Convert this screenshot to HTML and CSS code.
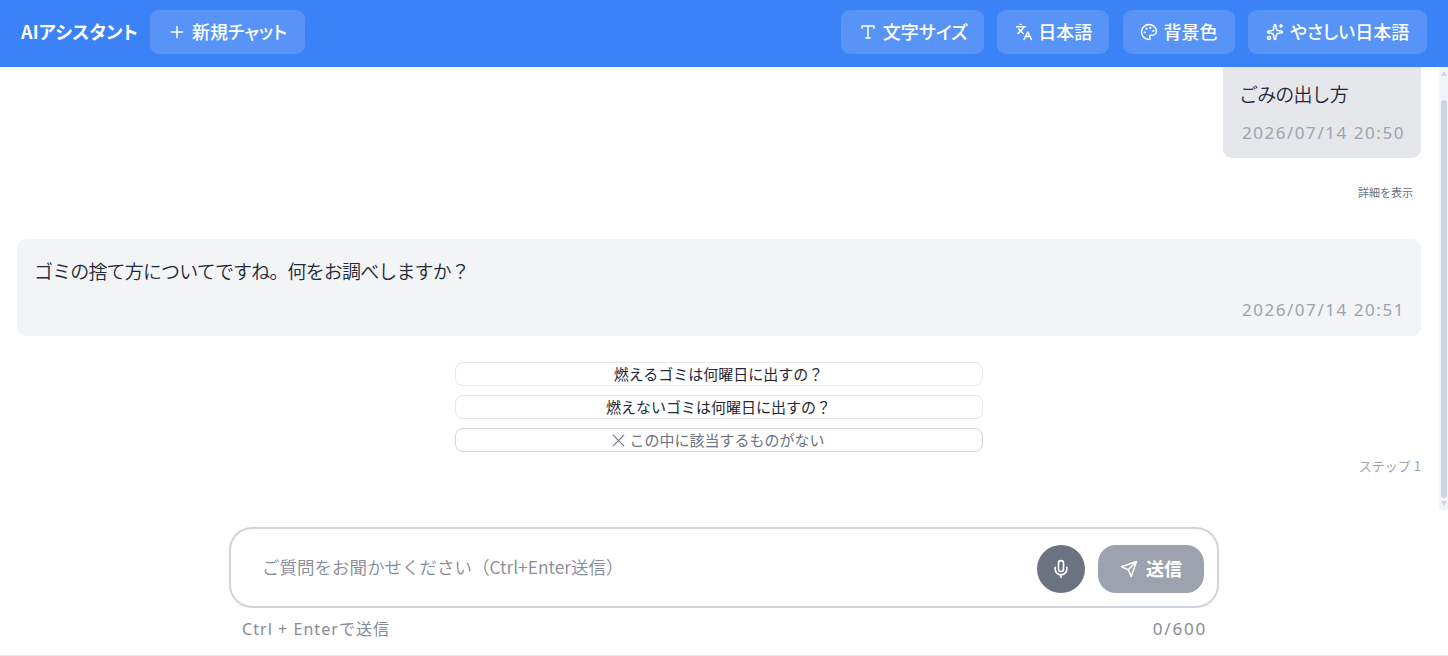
FILE: index.html
```html
<!DOCTYPE html>
<html lang="ja">
<head>
	<meta charset="UTF-8">
	<title>AIアシスタント</title>
	<link rel="stylesheet" href="styles.css">
</head>
<body>
	<div class="wrap">
		<header class="header">
			<h1 class="logo">AIアシスタント</h1>
			<button class="btn btn-new">
				<svg class="icon" viewBox="0 0 24 24"><path d="M4.5 12h15M12 4.5v15"/></svg>
				<span>新規チャット</span>
			</button>
			<nav class="tools">
				<button class="btn btn-size">
					<svg class="icon" viewBox="0 0 24 24"><path d="M4 7V4h16v3M9 20h6M12 4v16"/></svg>
					<span>文字サイズ</span>
				</button>
				<button class="btn btn-lang">
					<svg class="icon" viewBox="0 0 24 24"><path d="m5 8 6 6M4 14l6-6 2-3M2 5h12M7 2h1M22 22l-5-10-5 10M14 18h6"/></svg>
					<span>日本語</span>
				</button>
				<button class="btn btn-color">
					<svg class="icon" viewBox="0 0 24 24"><path d="M12 2C6.5 2 2 6.5 2 12s4.5 10 10 10c.926 0 1.648-.746 1.648-1.688 0-.437-.18-.835-.437-1.125-.29-.289-.438-.652-.438-1.125a1.64 1.64 0 0 1 1.668-1.668h1.996c3.051 0 5.555-2.503 5.555-5.554C21.965 6.012 17.461 2 12 2z"/><g class="dots"><circle cx="13.5" cy="6.5" r=".9"/><circle cx="17.5" cy="10.5" r=".9"/><circle cx="8.5" cy="7.5" r=".9"/><circle cx="6.5" cy="12.5" r=".9"/></g></svg>
					<span>背景色</span>
				</button>
				<button class="btn btn-easy">
					<svg class="icon" viewBox="0 0 24 24"><path d="M11.017 2.814a1 1 0 0 1 1.966 0l1.051 5.558a2 2 0 0 0 1.594 1.594l5.558 1.051a1 1 0 0 1 0 1.966l-5.558 1.051a2 2 0 0 0-1.594 1.594l-1.051 5.558a1 1 0 0 1-1.966 0l-1.051-5.558a2 2 0 0 0-1.594-1.594l-5.558-1.051a1 1 0 0 1 0-1.966l5.558-1.051a2 2 0 0 0 1.594-1.594zM20 2v4M22 4h-4"/><circle cx="4" cy="20" r="2"/></svg>
					<span>やさしい日本語</span>
				</button>
			</nav>
		</header>
		<section class="chat">
			<div class="news">
				<div class="msg msg-user">
					<p class="text">ごみの出し方</p>
					<time>2026/07/14 20:50</time>
				</div>
				<a class="detail">詳細を表示</a>
				<div class="msg msg-bot">
					<p class="text">ゴミの捨て方についてですね。何をお調べしますか？</p>
					<time>2026/07/14 20:51</time>
				</div>
				<div class="choices">
					<button>燃えるゴミは何曜日に出すの？</button>
					<button>燃えないゴミは何曜日に出すの？</button>
					<button class="none">
						<svg class="icon" viewBox="0 0 14 14"><path d="M2 2l10 10M12 2L2 12"/></svg>
						<span>この中に該当するものがない</span>
					</button>
				</div>
				<p class="step">ステップ 1</p>
			</div>
			<div class="scroll">
				<i class="up"></i>
				<i class="thumb"></i>
				<i class="down"></i>
			</div>
		</section>
		<footer class="footer">
			<div class="box">
				<span class="holder">ご質問をお聞かせください（Ctrl+Enter送信）</span>
				<button class="mic">
					<svg class="icon" viewBox="0 0 24 24"><path d="M12 2a3 3 0 0 0-3 3v7a3 3 0 0 0 6 0V5a3 3 0 0 0-3-3zM19 10v2a7 7 0 0 1-14 0v-2M12 19v3"/></svg>
				</button>
				<button class="send">
					<svg class="icon" viewBox="0 0 24 24"><path d="M22 2 11 13M22 2l-7 20-4-9-9-4z"/></svg>
					<span>送信</span>
				</button>
			</div>
			<div class="hint">
				<span class="key">Ctrl + Enterで送信</span>
				<span class="count">0/600</span>
			</div>
		</footer>
	</div>
</body>
</html>
```
FILE: styles.css
```css
*{
	margin: 0;
	padding: 0;
	box-sizing: border-box;
}
body{
	font-family: "Noto Sans CJK JP",sans-serif;
	color:#1f2937;
	background:#fff;
}
button{
	font: inherit;
	color: inherit;
	border: 0;
	background: none;
	white-space: nowrap;
}
.wrap{
	display: flex;
	flex-direction: column;
	height: 656px;
	overflow: hidden;
	border-bottom: 1px solid #e5e7eb;
}
.icon{
	width: 18px;
	height: 18px;
	flex: none;
	fill: none;
	stroke: currentColor;
	stroke-width: 2;
	stroke-linecap: round;
	stroke-linejoin: round;
}
.dots{fill: currentColor;stroke-width: 1;}

/* header */
.header{
	display: flex;
	align-items: center;
	flex: none;
	height: 67px;
	padding: 0 21px 3px;
	background:#3b82f6;
	color:#fff;
}
.logo{
	width: 129px;
	padding-bottom: 2px;
	font-size: 18px;
	font-weight: 700;
	line-height: 42px;
	white-space: nowrap;
	letter-spacing: .25px;
	font-feature-settings: "palt";
}
.btn{
	display: flex;
	align-items: center;
	height: 44px;
	padding-left: 18px;
	border-radius: 9px;
	background:rgba(255,255,255,.15);
	font-size: 18px;
	font-weight: 500;
	line-height: 42px;
	font-feature-settings: "palt";
}
.btn span{padding-bottom: 2px;}
.btn .icon{margin-right: 6px;}
.btn-new{width: 155px;}
.tools{
	display: flex;
	gap: 13.4px;
	margin-left: auto;
}
.btn-size{width: 143px;}
.btn-lang,.btn-color{
	width: 112px;
	padding-left: 17px;
}
.btn-lang{padding-left: 18px;}
.btn-lang .icon{margin-right: 5px;}
.btn-easy{width: 179px;}

/* chat */
.chat{
	display: flex;
	flex: none;
	height: 443px;
	overflow: hidden;
}
.news{
	display: flex;
	flex-direction: column;
	flex: 1;
	padding: 0 18px 0 17px;
}
.msg{
	display: flex;
	flex-direction: column;
	flex: none;
	border-radius: 9px;
	padding: 0 17px;
}
.msg .text{
	font-size: 19px;
	font-weight: 350;
	line-height: 28px;
	letter-spacing: -.85px;
}
.msg time{
	align-self: flex-end;
	font-family: "Noto Sans","Noto Sans CJK JP",sans-serif;
	font-size: 17px;
	line-height: 24px;
	color:#9ca3af;
	letter-spacing: 1.55px;
}
.msg-user{
	align-self: flex-end;
	width: 198px;
	height: 99px;
	margin-top: -8px;
	padding-top: 21px;
	background:#e5e7eb;
}
.msg-user .text{margin-left: -1px;}
.msg time{margin: 13px -1px 0 0;}
.detail{
	align-self: flex-end;
	margin: 25px 8px 0 0;
	font-size: 11px;
	line-height: 18px;
	color:#6b7280;
}
.msg-bot{
	height: 97px;
	margin-top: 38px;
	padding-top: 18px;
	background:#f3f4f6;
}
.choices{
	display: flex;
	flex-direction: column;
	align-self: center;
	gap: 9px;
	width: 528px;
	margin-top: 26px;
}
.choices button{
	display: flex;
	align-items: center;
	justify-content: center;
	height: 24px;
	padding-right: 1px;
	border: 1px solid #e5e7eb;
	border-radius: 8px;
	font-size: 15px;
	line-height: 22px;
}
.choices .none{
	padding-right: 2px;
	border-color: #d1d5db;
	color:#6b7280;
}
.none .icon{
	width: 15px;
	height: 15px;
	margin-right: 3px;
	stroke-width: 1;
}
.step{
	margin-top: 4px;
	font-size: 13px;
	line-height: 20px;
	text-align: right;
	color:#9ca3af;
}
.scroll{
	display: flex;
	flex-direction: column;
	align-items: center;
	width: 9px;
	padding: 4px 0;
	background:#f1f5f9;
}
.scroll .thumb{
	width: 6px;
	height: 398px;
	margin: 24px 0 auto;
	border-radius: 3px;
	background:#cbd5e1;
}
.scroll .up,.scroll .down{
	border: 3px solid transparent;
	border-top: 0;
	border-bottom: 5px solid #cbd5e1;
}
.scroll .down{
	border-top: 5px solid #cbd5e1;
	border-bottom: 0;
}

/* input */
.footer{
	width: 990px;
	margin: 17px 0 0 229px;
}
.box{
	display: flex;
	align-items: center;
	height: 81px;
	padding: 2px 13px 0 31px;
	border: 2px solid #d1d5db;
	border-radius: 23px;
}
.holder{
	flex: 1;
	padding-bottom: 4px;
	font-size: 17.5px;
	font-weight: 350;
	line-height: 26px;
	color:#858b97;
}
.mic{
	display: flex;
	align-items: center;
	justify-content: center;
	width: 48px;
	height: 48px;
	margin-right: 13px;
	border-radius: 50%;
	background:#6b7280;
	color:#fff;
}
.mic .icon{
	width: 20px;
	height: 20px;
}
.send{
	display: flex;
	align-items: center;
	justify-content: center;
	gap: 8px;
	width: 106px;
	height: 48px;
	border-radius: 18px;
	background:#9ca3af;
	color:#fff;
	font-size: 18px;
	font-weight: 700;
}
.send span{padding-bottom: 2px;}
.hint{
	display: flex;
	justify-content: space-between;
	padding: 9px 12px 0 13px;
	font-family: "Noto Sans","Noto Sans CJK JP",sans-serif;
	font-size: 17px;
	line-height: 24px;
	color:#858b97;
}
.key{
	font-size: 16px;
	letter-spacing: 1.05px;
}
.count{letter-spacing: 1.8px;}
```
